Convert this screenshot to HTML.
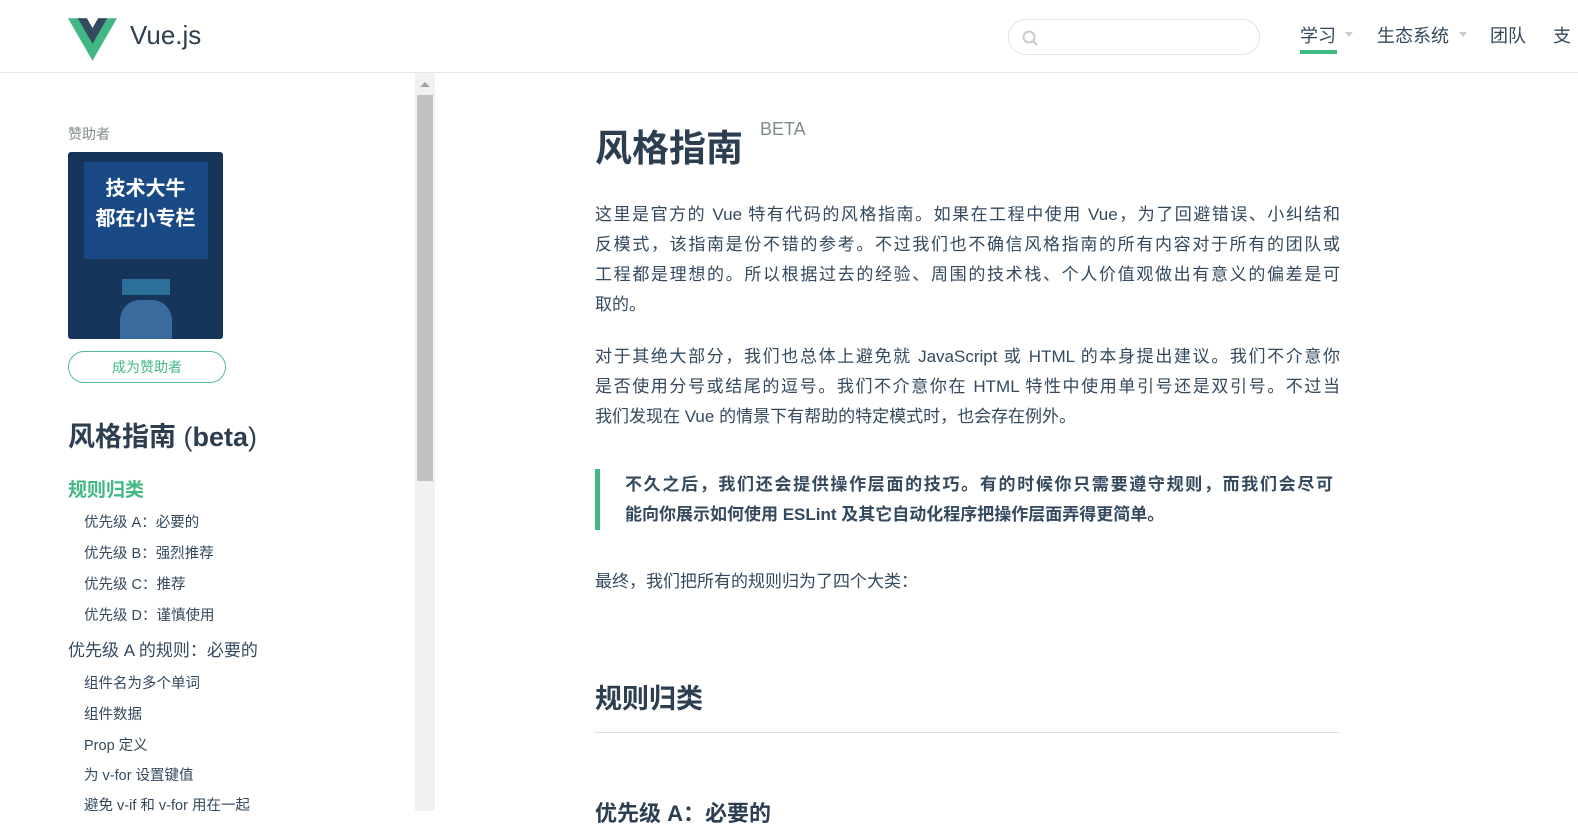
<!DOCTYPE html>
<html><head><meta charset="utf-8"><style>
*{margin:0;padding:0;box-sizing:border-box}
body{width:1578px;height:811px;overflow:hidden;background:#fff;font-family:"Liberation Sans","Noto Sans CJK SC",sans-serif;color:#34495e;position:relative}
.hdr{position:absolute;left:0;top:0;width:1578px;height:73px;border-bottom:1px solid #e6e6e6;background:#fff}
.abs{position:absolute;white-space:nowrap}
.sb{position:absolute;left:415px;top:73px;width:20px;height:738px;background:#f1f1f1}
.p{position:absolute;left:595px;width:745px;font-size:17px;line-height:30px;color:#34495e}
.p .j{display:block;white-space:nowrap;text-align:justify;text-align-last:justify}
.p .l{display:block;white-space:nowrap}
.si{position:absolute;left:84px;font-size:14.5px;color:#34495e;white-space:nowrap}
</style></head><body>
<div class="hdr">
<svg class="abs" style="left:68px;top:18px" width="49" height="43" viewBox="0 0 261.76 226.69"><path d="M161.096.001l-30.225 52.351L100.647.001H-.005l130.877 226.688L261.749.001z" fill="#41b883"/><path d="M161.096.001l-30.225 52.351L100.647.001H52.346l78.526 136.01L209.398.001z" fill="#34495e"/></svg>
<div class="abs" style="left:130px;top:20px;font-size:26px;color:#2c3e50">Vue.js</div>
<div class="abs" style="left:1008px;top:19px;width:252px;height:36px;border:1px solid #e3e3e3;border-radius:18px"></div>
<svg class="abs" style="left:1021px;top:29px" width="20" height="20" viewBox="0 0 20 20"><circle cx="8" cy="8" r="5.5" fill="none" stroke="#ccc" stroke-width="2"/><path d="M12 12l4 4" stroke="#ccc" stroke-width="2.2"/></svg>
<div class="abs" style="left:1300px;top:22px;font-size:18px">学习</div>
<div class="abs" style="left:1300px;top:50px;width:37px;height:4px;background:#42b983"></div>
<div class="abs" style="left:1345px;top:32px;border:4.5px solid transparent;border-top:5px solid #ccc"></div>
<div class="abs" style="left:1377px;top:22px;font-size:18px">生态系统</div>
<div class="abs" style="left:1459px;top:32px;border:4.5px solid transparent;border-top:5px solid #ccc"></div>
<div class="abs" style="left:1490px;top:22px;font-size:18px">团队</div>
<div class="abs" style="left:1553px;top:22px;font-size:18px">支</div>
</div>
<div class="abs" style="left:68px;top:124px;font-size:14px;color:#7f8c8d">赞助者</div>
<div class="abs" style="left:68px;top:152px;width:155px;height:187px;background:#17345a;border-radius:3px;overflow:hidden">
<div class="abs" style="left:16px;top:10px;width:124px;height:97px;background:#1a4a85"></div>
<div class="abs" style="left:0;top:22px;width:155px;text-align:center;color:#fff;font-size:20px;font-weight:bold;line-height:30px">技术大牛<br>都在小专栏</div>
<div class="abs" style="left:54px;top:127px;width:48px;height:16px;background:#2b6f9a"></div>
<div class="abs" style="left:52px;top:148px;width:52px;height:40px;background:#3a6b9e;border-radius:20px 20px 0 0"></div>
</div>
<div class="abs" style="left:68px;top:351px;width:158px;height:32px;border:1px solid #4fc08d;border-radius:16px;text-align:center;line-height:30px;font-size:14px;color:#42b983">成为赞助者</div>
<div class="abs" style="left:68px;top:415px;font-size:27px;font-weight:bold;color:#2c3e50">风格指南 <span style="font-weight:normal">(</span>beta<span style="font-weight:normal">)</span></div>
<div class="abs" style="left:68px;top:475px;font-size:19px;font-weight:bold;color:#42b983">规则归类</div>
<div class="si" style="top:511px">优先级 A：必要的</div>
<div class="si" style="top:542px">优先级 B：强烈推荐</div>
<div class="si" style="top:573px">优先级 C：推荐</div>
<div class="si" style="top:604px">优先级 D：谨慎使用</div>
<div class="abs" style="left:68px;top:636px;font-size:17px">优先级 A 的规则：必要的</div>
<div class="si" style="top:672px">组件名为多个单词</div>
<div class="si" style="top:703px">组件数据</div>
<div class="si" style="top:734px">Prop 定义</div>
<div class="si" style="top:764px">为 v-for 设置键值</div>
<div class="si" style="top:794px">避免 v-if 和 v-for 用在一起</div>
<div class="sb"><div class="abs" style="left:5px;top:9px;border:5px solid transparent;border-bottom:5px solid #a3a3a3;border-top:0"></div><div class="abs" style="left:2px;top:22px;width:16px;height:386px;background:#c1c1c1"></div></div>
<div class="abs" style="left:595px;top:118px;font-size:37px;font-weight:bold;color:#2c3e50">风格指南</div>
<div class="abs" style="left:760px;top:119px;font-size:18px;color:#7f8c8d">BETA</div>
<div class="p" style="top:200px"><span class="j">这里是官方的 Vue 特有代码的风格指南。如果在工程中使用 Vue，为了回避错误、小纠结和</span><span class="j">反模式，该指南是份不错的参考。不过我们也不确信风格指南的所有内容对于所有的团队或</span><span class="j">工程都是理想的。所以根据过去的经验、周围的技术栈、个人价值观做出有意义的偏差是可</span><span class="l">取的。</span></div>
<div class="p" style="top:342px"><span class="j">对于其绝大部分，我们也总体上避免就 JavaScript 或 HTML 的本身提出建议。我们不介意你</span><span class="j">是否使用分号或结尾的逗号。我们不介意你在 HTML 特性中使用单引号还是双引号。不过当</span><span class="l">我们发现在 Vue 的情景下有帮助的特定模式时，也会存在例外。</span></div>
<div class="abs" style="left:595px;top:469px;width:5px;height:61px;background:#42b983"></div>
<div class="p" style="left:625px;width:708px;top:470px;font-weight:bold;font-size:17px"><span class="j">不久之后，我们还会提供操作层面的技巧。有的时候你只需要遵守规则，而我们会尽可</span><span class="l">能向你展示如何使用 ESLint 及其它自动化程序把操作层面弄得更简单。</span></div>
<div class="p" style="top:567px"><span class="l">最终，我们把所有的规则归为了四个大类：</span></div>
<div class="abs" style="left:595px;top:677px;font-size:27px;font-weight:bold;color:#2c3e50">规则归类</div>
<div class="abs" style="left:595px;top:732px;width:745px;height:1px;background:#ddd"></div>
<div class="abs" style="left:595px;top:796px;font-size:22px;font-weight:bold;color:#2c3e50">优先级 A：必要的</div>
</body></html>
